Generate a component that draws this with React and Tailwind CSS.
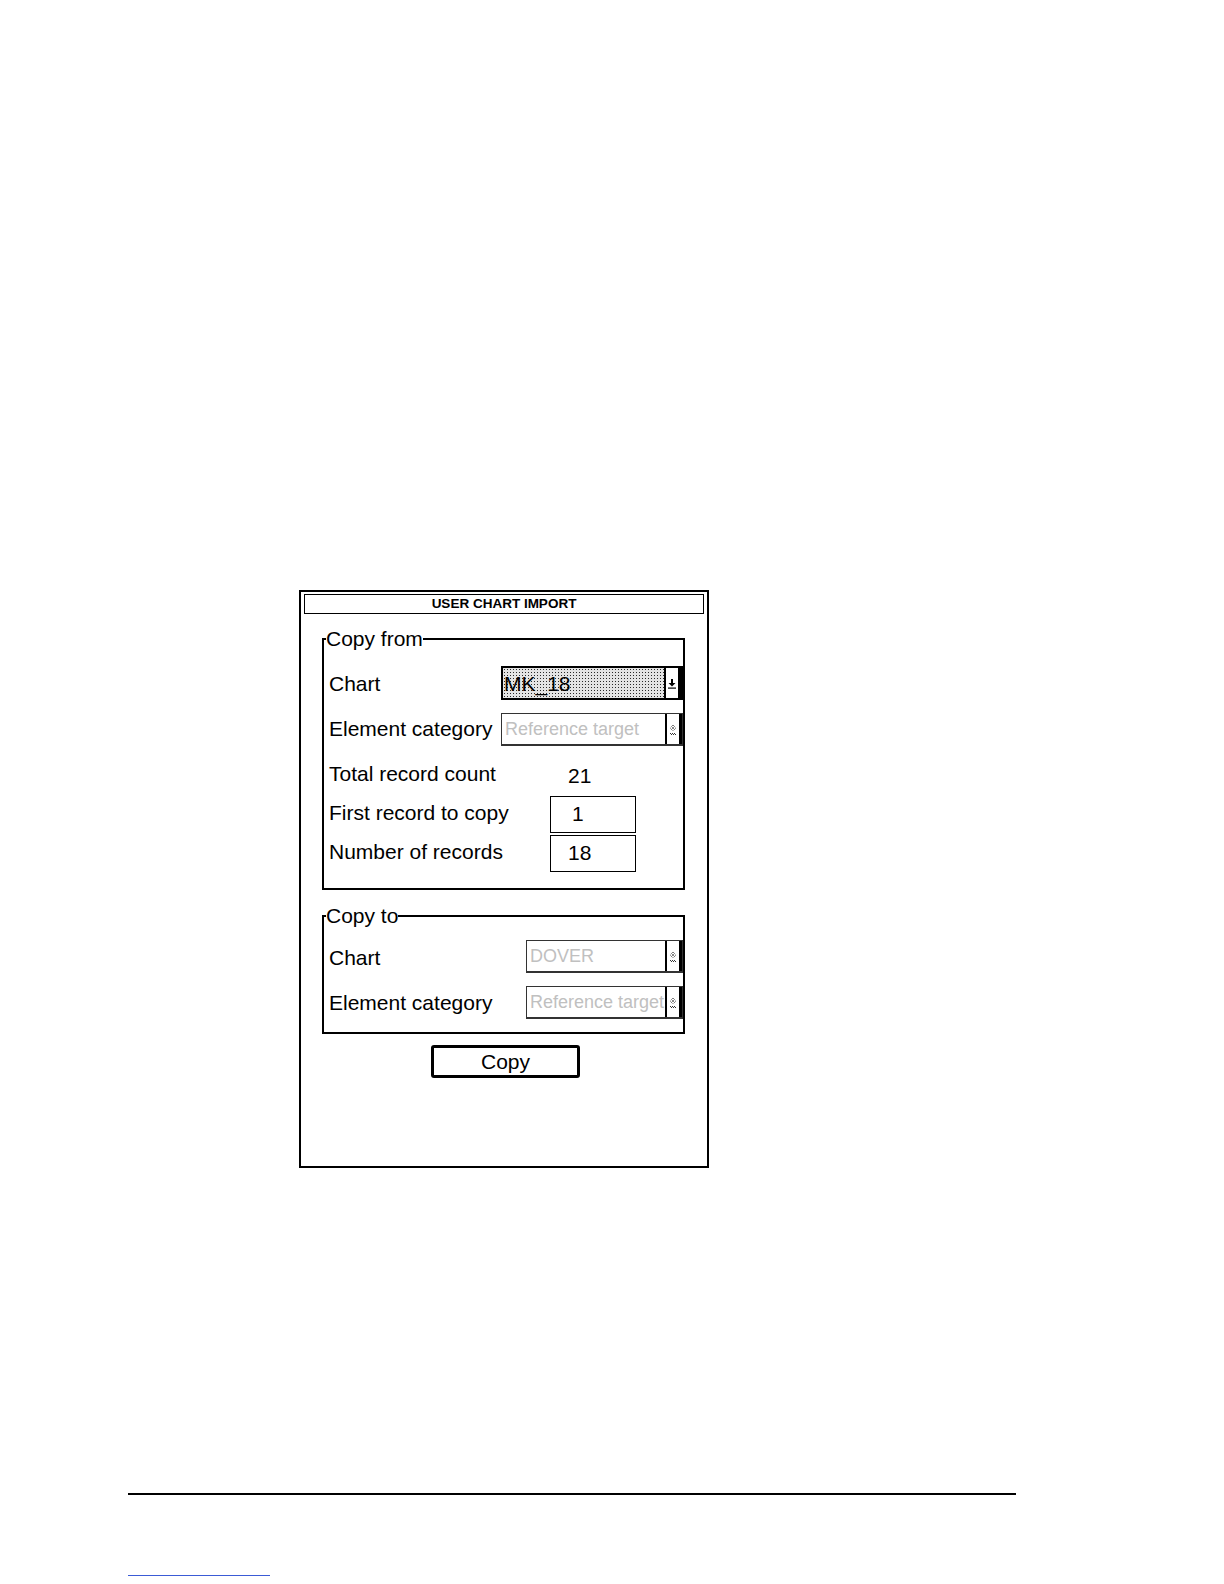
import React from "react";

// small arrow shown on the dropdown button
const ArrowIcon = ({ disabled }) =>
  disabled ? (
    <svg width="8" height="11" viewBox="0 0 8 11">
      <path d="M4 1 L7 4 L4 7 L1 4 Z" fill="none" stroke="#444" strokeWidth="1" strokeDasharray="1 1" />
      <rect x="3" y="3" width="2" height="2" fill="#888" />
      <rect x="1" y="9" width="1" height="1" fill="#333" />
      <rect x="3" y="9" width="1" height="1" fill="#333" />
      <rect x="5" y="9" width="1" height="1" fill="#333" />
      <rect x="2" y="10" width="1" height="1" fill="#333" />
      <rect x="4" y="10" width="1" height="1" fill="#333" />
      <rect x="6" y="10" width="1" height="1" fill="#333" />
    </svg>
  ) : (
    <svg width="8" height="11" viewBox="0 0 8 11">
      <rect x="3" y="1" width="2" height="4" fill="#000" />
      <path d="M0.5 5 L7.5 5 L4 8.5 Z" fill="#000" />
      <rect x="0" y="9.5" width="8" height="1.2" fill="#000" />
    </svg>
  );

const Dropdown = ({ value, disabled }) => {
  if (!disabled) {
    return (
      <div className="flex h-full w-full border-2 border-black">
        <div className="flex-1 min-w-0 flex items-center overflow-hidden whitespace-nowrap pl-[1px] text-[21px] leading-none bg-[#e4e4e4] bg-[radial-gradient(circle,#2a2a2a_0.6px,transparent_0.9px)] bg-[length:3px_3px]">
          {value}
        </div>
        <div className="w-[17px] shrink-0 border-l-2 border-r-[3px] border-black bg-white flex items-center justify-center">
          <ArrowIcon />
        </div>
      </div>
    );
  }
  return (
    <div className="flex h-full w-full border border-[#333] border-b-2">
      <div className="flex-1 min-w-0 overflow-hidden pl-[3px] flex items-center bg-white">
        <span className="whitespace-nowrap text-[18px] leading-none text-[#c0c0c0]">{value}</span>
      </div>
      <div className="w-[17px] shrink-0 border-l-2 border-r-[3px] border-black bg-white flex items-center justify-center">
        <ArrowIcon disabled />
      </div>
    </div>
  );
};

const Label = ({ children }) => (
  <span className="text-[21px] leading-none whitespace-nowrap">{children}</span>
);

const App = () => {
  return (
    <div className="w-[1224px] h-[1584px] bg-white text-black font-['Liberation_Sans',Arial,sans-serif]">
      <div className="pt-[590px]">
        {/* dialog */}
        <div className="ml-[299px] w-[410px] h-[578px] border-2 border-black">
          <div className="mx-[3px] mt-[2px] h-[20px] border border-black flex items-center justify-center text-[13.5px] font-bold leading-none">
            USER CHART IMPORT
          </div>

          {/* Copy from */}
          <fieldset className="ml-[21px] mt-[14px] w-[363px] min-w-0 border-2 border-black">
            <legend className="ml-[2px] text-[21px] leading-[22px]">Copy from</legend>
            <div className="pl-[5px] pt-[16px] pb-[16px] flex flex-col">
              <div className="flex items-center h-[34px]">
                <div className="w-[172px] shrink-0 pt-[5px]">
                  <Label>Chart</Label>
                </div>
                <div className="flex-1 min-w-0 h-full">
                  <Dropdown value="MK_18" />
                </div>
              </div>
              <div className="flex items-center h-[33px] mt-[13px]">
                <div className="w-[172px] shrink-0 pt-[2px]">
                  <Label>Element category</Label>
                </div>
                <div className="flex-1 min-w-0 h-full">
                  <Dropdown value="Reference target" disabled />
                </div>
              </div>
              <div className="flex items-center h-[34px] mt-[12px]">
                <div className="w-[221px] shrink-0">
                  <Label>Total record count</Label>
                </div>
                <span className="pl-[18px] text-[21px] leading-none">21</span>
              </div>
              <div className="flex items-center h-[37px] mt-[4px]">
                <div className="w-[221px] shrink-0">
                  <Label>First record to copy</Label>
                </div>
                <div className="w-[86px] h-full border border-black flex items-center pl-[21px] pb-[3px] text-[21px] leading-none">
                  1
                </div>
              </div>
              <div className="flex items-center h-[37px] mt-[2px]">
                <div className="w-[221px] shrink-0">
                  <Label>Number of records</Label>
                </div>
                <div className="w-[86px] h-full border border-black flex items-center pl-[17px] pb-[3px] text-[21px] leading-none">
                  18
                </div>
              </div>
            </div>
          </fieldset>

          {/* Copy to */}
          <fieldset className="ml-[21px] mt-[15px] w-[363px] min-w-0 border-2 border-black">
            <legend className="ml-[2px] text-[21px] leading-[22px]">Copy to</legend>
            <div className="pl-[5px] pt-[13px] pb-[13px] flex flex-col">
              <div className="flex items-center h-[33px]">
                <div className="w-[197px] shrink-0 pt-[5px]">
                  <Label>Chart</Label>
                </div>
                <div className="flex-1 min-w-0 h-full">
                  <Dropdown value="DOVER" disabled />
                </div>
              </div>
              <div className="flex items-center h-[33px] mt-[13px]">
                <div className="w-[197px] shrink-0 pt-[3px]">
                  <Label>Element category</Label>
                </div>
                <div className="flex-1 min-w-0 h-full">
                  <Dropdown value="Reference target" disabled />
                </div>
              </div>
            </div>
          </fieldset>

          <button className="block ml-[130px] mt-[11px] w-[149px] h-[33px] border-[3px] border-black rounded-[3px] bg-white text-[21px] leading-none">
            Copy
          </button>
        </div>
      </div>

      {/* page footer rules */}
      <div className="ml-[128px] mt-[325px] w-[888px] h-[2px] bg-black" />
      <div className="ml-[128px] mt-[80px] w-[142px] h-[1px] bg-[#3b5bd6]" />
    </div>
  );
};

export default App;
